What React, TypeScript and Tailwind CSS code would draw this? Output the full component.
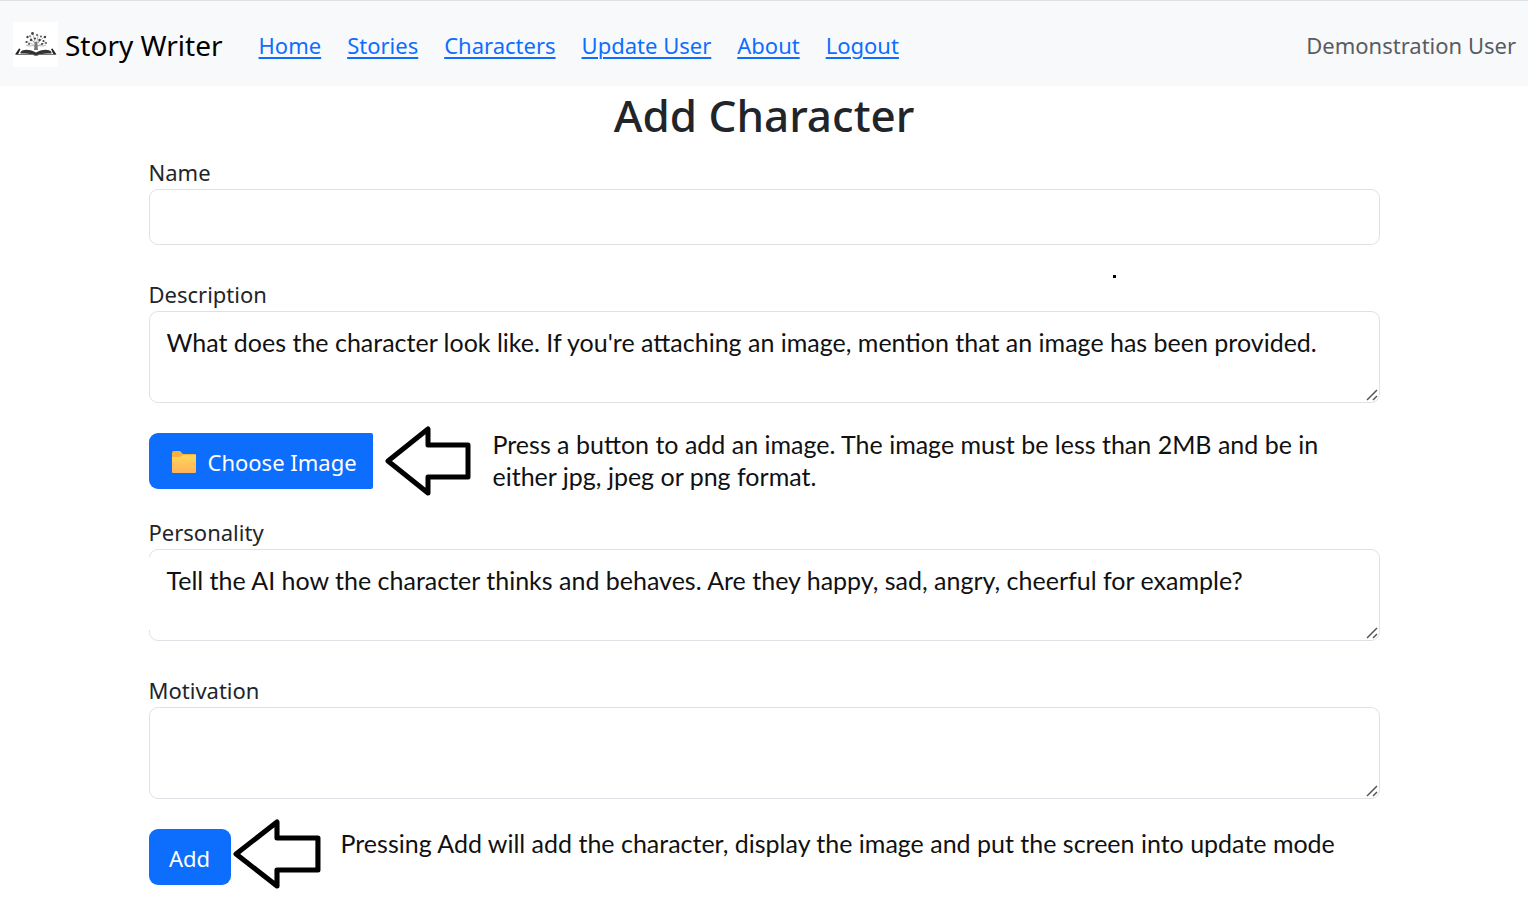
import type { ReactNode } from 'react';

const links = ['Home', 'Stories', 'Characters', 'Update User', 'About', 'Logout'];

function Logo() {
  return (
    <svg width="45" height="45" viewBox="0 0 45 45" aria-hidden="true" className="shrink-0">
      <rect width="45" height="45" fill="#fff" />
      <g stroke="#888" fill="none" strokeWidth="0.6">
        <path d="M23 26C22 22 17 22 14 19M23 26C22 20 19 19 17 14M23 26C22 19 21 16 20 12M23 26C23 20 25 17 25 13M23 26C24 21 27 19 31 15M23 26C25 22 29 23 33 20M22 24C18 23 16 25 13 23M24 24C28 23 30 25 33 23M22 21L18 17M24 21L28 17" />
      </g>
      <path d="M22 20L21 28H25L24 20Z" fill="#777" />
      <g fill="#444">
        <circle cx="19.500" cy="11.500" r="1.400" /><circle cx="14.500" cy="15" r="1.200" /><circle cx="17" cy="14" r="0.800" />
        <circle cx="24" cy="13" r="0.900" /><circle cx="28" cy="14.500" r="0.900" /><circle cx="32" cy="15" r="1.200" />
        <circle cx="18" cy="18" r="1.200" /><circle cx="22" cy="16.500" r="1.100" /><circle cx="26.500" cy="18" r="1.200" />
        <circle cx="30.500" cy="19" r="1.100" /><circle cx="33" cy="21" r="0.900" /><circle cx="13.500" cy="20" r="1.100" />
        <circle cx="16" cy="22" r="0.900" /><circle cx="29" cy="22" r="1.100" />
      </g>
      <path d="M2 32.500L6 26.500L7.500 27L5 32.500ZM43.500 32.500L39.500 26.500L38 27L40.500 32.500Z" fill="#222" />
      <path d="M7.500 30C10 27 16 27 22 30L23 30.500L24 30C30 27 36 27 38.500 30V31.500C33 31.500 28 31.500 25 33H21C18 31.500 13 31.500 7.500 31.500Z" fill="#333" />
      <path d="M3 32.500H20L22 33.500H24L26 32.500H43" stroke="#666" strokeWidth="0.900" fill="none" />
    </svg>
  );
}

function Folder() {
  return (
    <svg width="26" height="24" viewBox="0 0 26 24" aria-hidden="true">
      <defs>
        <linearGradient id="folder" x1="0" y1="0" x2="0" y2="1">
          <stop offset="0" stopColor="#ffd657" />
          <stop offset="1" stopColor="#ffb35c" />
        </linearGradient>
      </defs>
      <path d="M1 3Q1 1 3 1H9L12 4H24Q25 4 25 5V10H1Z" fill="#f7b13d" />
      <path d="M1 7H9L12 5H25V22Q25 23 24 23H2Q1 23 1 22Z" fill="url(#folder)" />
    </svg>
  );
}

function Arrow({ wide = false }: { wide?: boolean }) {
  return (
    <svg
      width={wide ? 88 : 86}
      height="70"
      viewBox="0 0 86 70"
      preserveAspectRatio="none"
      aria-hidden="true"
      className="shrink-0"
    >
      <path d="M3 35L43 3V19H83V51H43V67Z" fill="#fff" stroke="#000" strokeWidth="5" strokeLinejoin="round" />
    </svg>
  );
}

function Field({ id, label, children }: { id: string; label: string; children: ReactNode }) {
  return (
    <div className="relative">
      <label htmlFor={id} className="block h-9 pt-px leading-9">
        {label}
      </label>
      {children}
    </div>
  );
}

function Area({ id, text, open = false }: { id: string; text?: string; open?: boolean }) {
  return (
    <div className="relative h-[92px]">
      <textarea
        id={id}
        defaultValue={text}
        spellCheck={false}
        className="block h-full w-full resize-none overflow-hidden rounded-[9px] border border-[#dee2e6] bg-white px-[17px] py-3.5 font-['Lato'] text-[25px] leading-8 text-[#111]"
      />
      {open && <span className="absolute top-2 bottom-[11px] left-0 w-px bg-white" />}
      <svg width="14" height="14" viewBox="0 0 14 14" aria-hidden="true" className="absolute right-px bottom-px">
        <path d="M2 12L12 2M8 12L12 8" stroke="#555" strokeWidth="1.500" />
      </svg>
    </div>
  );
}

export default function App() {
  return (
    <div className="min-h-screen bg-white font-['Noto_Sans',sans-serif] text-[22px] text-[#212529]">
      <header className="flex min-h-[86px] items-center border-t border-[#dfe2e4] bg-[#f8f9fb] pt-0.5 pr-3 pl-[13px]">
        <a href="#" className="flex items-center gap-[7px] text-[28px] leading-10 whitespace-nowrap text-black">
          <Logo />
          Story Writer
        </a>
        <nav className="ml-9 flex gap-[26px] pt-0.5">
          {links.map((link) => (
            <a key={link} href="#" className="whitespace-nowrap text-[#0d6efd] underline decoration-2 underline-offset-3">
              {link}
            </a>
          ))}
        </nav>
        <span className="ml-auto pt-0.5 whitespace-nowrap text-[#595c5f]">Demonstration User</span>
      </header>

      <main className="mx-auto w-[calc(100%-32px)] max-w-[1231px]">
        <h1 className="pt-px pb-2.5 text-center text-[44px] leading-14 font-medium">Add Character</h1>
        <form onSubmit={(event) => event.preventDefault()}>
          <div className="flex flex-col gap-[30px]">
            <Field id="name" label="Name">
              <input
                id="name"
                type="text"
                className="block h-14 w-full rounded-[9px] border border-[#dee2e6] bg-white px-4"
              />
            </Field>
            <Field id="description" label="Description">
              <span className="absolute top-0 right-[264px] size-[3px] bg-black" />
              <Area
                id="description"
                text="What does the character look like. If you're attaching an image, mention that an image has been provided."
              />
            </Field>
          </div>

          <div className="mt-[30px] mb-6 flex h-14 items-center">
            <button
              type="button"
              className="flex h-14 min-w-56 shrink-0 items-center gap-[11px] rounded-l-[9px] rounded-r-xs bg-[#0d6efd] pt-0.5 pr-3 pl-[22px] whitespace-nowrap text-white"
            >
              <Folder />
              Choose Image
            </button>
            <div className="ml-3 flex items-center gap-[22px]">
              <Arrow />
              <p className="max-w-[850px] pb-0.5 font-['Lato'] text-[25px] leading-8 text-[#111]">
                Press a button to add an image. The image must be less than 2MB and be in either jpg, jpeg or png
                format.
              </p>
            </div>
          </div>

          <div className="flex flex-col gap-[30px]">
            <Field id="personality" label="Personality">
              <Area
                id="personality"
                open
                text="Tell the AI how the character thinks and behaves. Are they happy, sad, angry, cheerful for example?"
              />
            </Field>
            <Field id="motivation" label="Motivation">
              <Area id="motivation" />
            </Field>
          </div>

          <div className="mt-5 flex items-start">
            <button type="submit" className="mt-2.5 h-14 min-w-[82px] shrink-0 rounded-[9px] bg-[#0d6efd] px-4 pt-0.5 text-white">
              Add
            </button>
            <div className="ml-0.5 flex items-center gap-5">
              <Arrow wide />
              <p className="pb-[22px] font-['Lato'] text-[25px] leading-8 text-[#111]">
                Pressing Add will add the character, display the image and put the screen into update mode
              </p>
            </div>
          </div>
        </form>
      </main>
    </div>
  );
}
